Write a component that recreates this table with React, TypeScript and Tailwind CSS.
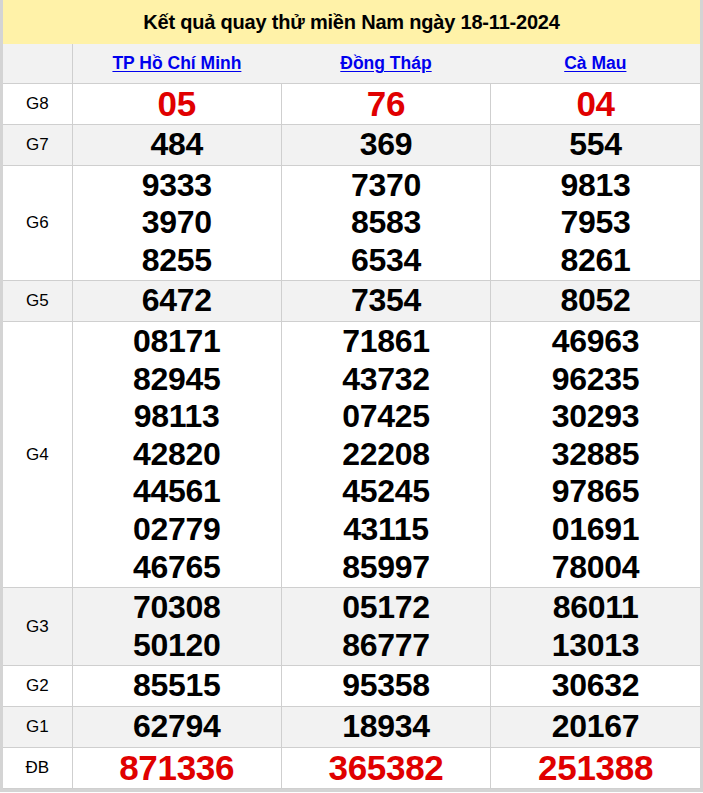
import React from 'react';

type Row = { label: string; values: string[][]; big?: boolean };

const cities = ['TP Hồ Chí Minh', 'Đồng Tháp', 'Cà Mau'];

const rows: Row[] = [
    { label: 'G8', values: [['05'], ['76'], ['04']], big: true },
    { label: 'G7', values: [['484'], ['369'], ['554']] },
    { label: 'G6', values: [['9333', '3970', '8255'], ['7370', '8583', '6534'], ['9813', '7953', '8261']] },
    { label: 'G5', values: [['6472'], ['7354'], ['8052']] },
    {
        label: 'G4',
        values: [
            ['08171', '82945', '98113', '42820', '44561', '02779', '46765'],
            ['71861', '43732', '07425', '22208', '45245', '43115', '85997'],
            ['46963', '96235', '30293', '32885', '97865', '01691', '78004'],
        ],
    },
    { label: 'G3', values: [['70308', '50120'], ['05172', '86777'], ['86011', '13013']] },
    { label: 'G2', values: [['85515'], ['95358'], ['30632']] },
    { label: 'G1', values: [['62794'], ['18934'], ['20167']] },
    { label: 'ĐB', values: [['871336'], ['365382'], ['251388']], big: true },
];

export default function App() {
    return (
        <div className="w-[703px] h-[793px] bg-white font-['Liberation_Sans',Arial,sans-serif]">
            <div className="border-x-[3px] border-b-[3px] border-[#d4d4d4]">
                <div className="h-[44px] bg-[#fff2a8] flex items-center justify-center text-[20px] font-bold text-black tracking-[-0.2px]">
                    Kết quả quay thử miền Nam ngày 18-11-2024
                </div>
                <table className="w-full border-collapse table-fixed">
                    <colgroup>
                        <col className="w-[69px]" />
                        <col />
                        <col />
                        <col />
                    </colgroup>
                    <thead>
                        <tr className="bg-[#f2f2f2] h-[39px]">
                            <th className="border-r border-[#cfcfcf]"></th>
                            {cities.map((c) => (
                                <th key={c} className="text-center">
                                    <a href="#" className="text-[17.5px] font-bold text-[#0000ee] underline underline-offset-2">
                                        {c}
                                    </a>
                                </th>
                            ))}
                        </tr>
                    </thead>
                    <tbody>
                        {rows.map((r, i) => (
                            <tr key={r.label} className={i % 2 === 1 ? 'bg-[#f2f2f2]' : 'bg-white'}>
                                <td className="border border-[#cfcfcf] border-l-0 text-center text-[17px] text-black">
                                    {r.label}
                                </td>
                                {r.values.map((v, j) => (
                                    <td
                                        key={j}
                                        className={`border border-[#cfcfcf] text-center py-px font-bold tracking-[-0.3px] ${
                                            j === 2 ? 'border-r-0' : ''
                                        } ${r.big ? 'text-[35px] text-[#e00000] leading-[38.5px]' : 'text-[32px] text-black leading-[37.6px]'}`}
                                    >
                                        {v.map((n) => (
                                            <div key={n}>{n}</div>
                                        ))}
                                    </td>
                                ))}
                            </tr>
                        ))}
                    </tbody>
                </table>
            </div>
        </div>
    );
}
